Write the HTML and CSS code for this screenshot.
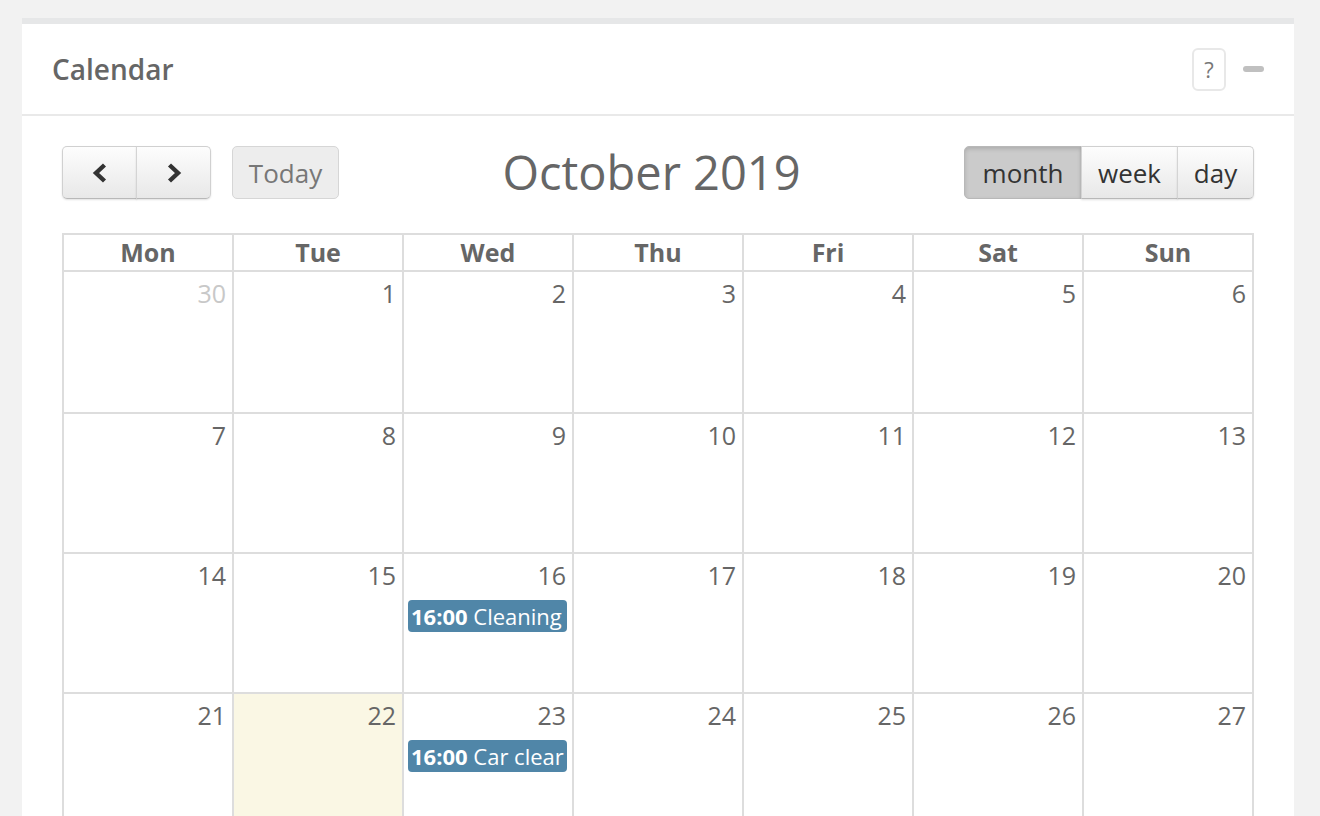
FILE: index.html
```html
<!doctype html>
<html>
 <head>
	<meta charset="UTF-8">
	<title>Calendar</title>
	<link rel="stylesheet" href="styles.css">
 </head>
 <body>
	<div class="panel">
		<div class="panel_head">
			<h2>Calendar</h2>
			<div class="panel_tools">
				<span class="help_btn">?</span>
				<span class="collapse_btn"></span>
			</div>
		</div>
		<div class="panel_body">
			<div class="toolbar">
				<div class="tb_left">
					<div class="btn_group">
						<button class="btn btn_arrow">
							<svg width="18" height="22" viewBox="0 0 18 22"><polyline points="13.5,3 5,11 13.5,19" fill="none" stroke="#333" stroke-width="4.4" stroke-linejoin="miter"/></svg>
						</button>
						<button class="btn btn_arrow">
							<svg width="18" height="22" viewBox="0 0 18 22"><polyline points="4.5,3 13,11 4.5,19" fill="none" stroke="#333" stroke-width="4.4" stroke-linejoin="miter"/></svg>
						</button>
					</div>
					<button class="btn btn_today">Today</button>
				</div>
				<h1 class="title">October 2019</h1>
				<div class="btn_group">
					<button class="btn btn_text btn_month active">month</button>
					<button class="btn btn_text btn_week">week</button>
					<button class="btn btn_text btn_day">day</button>
				</div>
			</div>

			<div class="month">
				<div class="head">Mon</div>
				<div class="head">Tue</div>
				<div class="head">Wed</div>
				<div class="head">Thu</div>
				<div class="head">Fri</div>
				<div class="head">Sat</div>
				<div class="head">Sun</div>

				<div class="day other"><span class="num">30</span></div>
				<div class="day"><span class="num">1</span></div>
				<div class="day"><span class="num">2</span></div>
				<div class="day"><span class="num">3</span></div>
				<div class="day"><span class="num">4</span></div>
				<div class="day"><span class="num">5</span></div>
				<div class="day"><span class="num">6</span></div>

				<div class="day"><span class="num">7</span></div>
				<div class="day"><span class="num">8</span></div>
				<div class="day"><span class="num">9</span></div>
				<div class="day"><span class="num">10</span></div>
				<div class="day"><span class="num">11</span></div>
				<div class="day"><span class="num">12</span></div>
				<div class="day"><span class="num">13</span></div>

				<div class="day"><span class="num">14</span></div>
				<div class="day"><span class="num">15</span></div>
				<div class="day">
					<span class="num">16</span>
					<div class="event"><b>16:00</b> Cleaning</div>
				</div>
				<div class="day"><span class="num">17</span></div>
				<div class="day"><span class="num">18</span></div>
				<div class="day"><span class="num">19</span></div>
				<div class="day"><span class="num">20</span></div>

				<div class="day"><span class="num">21</span></div>
				<div class="day today"><span class="num">22</span></div>
				<div class="day">
					<span class="num">23</span>
					<div class="event"><b>16:00</b> Car clear</div>
				</div>
				<div class="day"><span class="num">24</span></div>
				<div class="day"><span class="num">25</span></div>
				<div class="day"><span class="num">26</span></div>
				<div class="day"><span class="num">27</span></div>

				<div class="day"><span class="num">28</span></div>
				<div class="day"><span class="num">29</span></div>
				<div class="day"><span class="num">30</span></div>
				<div class="day"><span class="num">31</span></div>
				<div class="day other"><span class="num">1</span></div>
				<div class="day other"><span class="num">2</span></div>
				<div class="day other"><span class="num">3</span></div>
			</div>
		</div>
	</div>
 </body>
</html>
```

FILE: styles.css
```css
html,body{margin:0;padding:0}
body{
	background:#f2f2f2;
	font-family:"Open Sans","Liberation Sans",sans-serif;
	color:#666;
	overflow:hidden;
}
/*外层面板*/
.panel{
	margin:18px 26px 0 22px;
	background:#fff;
	border-top:6px solid #e6e7e8;
}
.panel_head{
	height:90px;
	display:flex;
	align-items:center;
	justify-content:space-between;
	padding:0 30px;
	border-bottom:2px solid #e9e9e9;
}
.panel_head h2{
	margin:0;
	font-size:28px;
	font-weight:600;
	color:#666;
}
.panel_tools{
	display:flex;
	align-items:center;
	gap:17px;
}
.help_btn{
	width:30px;height:39px;
	border:2px solid #e8e8e8;
	border-radius:6px;
	display:flex;
	align-items:center;
	justify-content:center;
	font-size:22px;
	color:#777;
}
.collapse_btn{
	width:21px;height:6px;
	border-radius:3px;
	background:#c0c0c0;
}
.panel_body{padding:30px 40px 40px}

/*工具栏*/
.toolbar{
	display:flex;
	align-items:center;
	margin-bottom:34px;
}
.tb_left{display:flex;gap:21px}
.title{
	flex:1;
	margin:0;
	text-align:center;
	font-size:47px;
	font-weight:400;
	color:#666;
	line-height:53px;
}
.btn_group{display:flex}
.btn{
	height:53px;
	margin:0;
	border:1px solid #d0d0d0;
	border-bottom-color:#b8b8b8;
	background:linear-gradient(#fdfdfd,#e8e8e8);
	box-shadow:0 1px 2px rgba(0,0,0,.12);
	font-family:inherit;
	color:#333;
	display:flex;
	align-items:center;
	justify-content:center;
	padding:0;
}
.btn_group .btn{border-radius:0}
.btn_group .btn:first-child{border-radius:5px 0 0 5px}
.btn_group .btn:last-child{border-radius:0 5px 5px 0}
.btn_group .btn+.btn{border-left-color:#d4d4d4;margin-left:-1px}
.btn_arrow{width:75px}
.btn_today{
	width:107px;
	border-radius:5px;
	background:#ededed;
	border-color:#d6d6d6;
	box-shadow:none;
	color:#777;
	font-size:26px;
}
.btn_text{
	font-size:26px;
	color:#333;
}
.btn_month{width:118px}
.btn_week{width:97px}
.btn_day{width:77px}
.btn_group .active{
	background:#cbcbcb;
	border-color:#b8b8b8;
	box-shadow:inset 0 2px 4px rgba(0,0,0,.15);
}

/*月视图*/
.month{
	display:grid;
	grid-template-columns:repeat(7,1fr);
	border-top:2px solid #ddd;
	border-left:2px solid #ddd;
}
.head{
	height:35px;
	line-height:35px;
	text-align:center;
	font-size:25px;
	font-weight:700;
	color:#666;
	border-right:2px solid #ddd;
	border-bottom:2px solid #ddd;
}
.day{
	height:138px;
	border-right:2px solid #ddd;
	border-bottom:2px solid #ddd;
	display:flex;
	flex-direction:column;
	align-items:stretch;
}
.month .head+.day,.month .day:nth-child(-n+14){height:140px}
.num{
	display:block;
	text-align:right;
	padding:4px 6px 0;
	font-size:25px;
	line-height:34px;
	color:#666;
}
.other .num{color:#c8c8c8}
.today{background:#faf7e4}
.event{
	margin:8px 5px 0 4px;
	height:32px;
	line-height:32px;
	padding:0 3px;
	border-radius:4px;
	background:#5086a8;
	color:#fff;
	font-size:22px;
	white-space:nowrap;
	overflow:hidden;
}
```
